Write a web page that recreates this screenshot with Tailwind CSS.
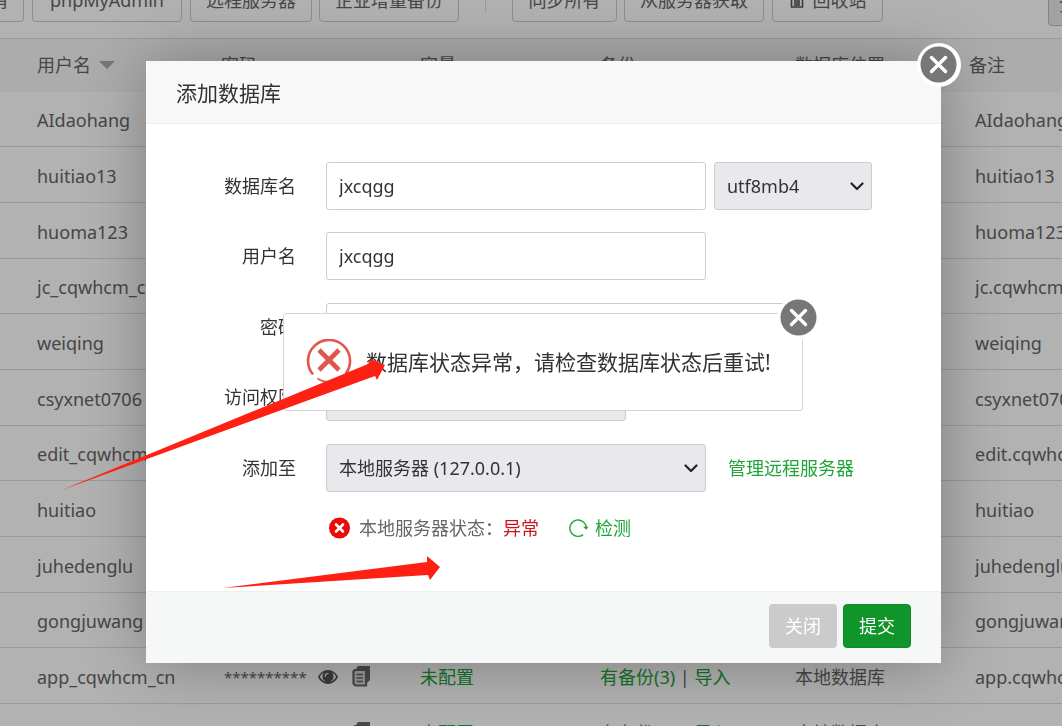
<!DOCTYPE html>
<html lang="zh-CN">
<head>
  <meta charset="UTF-8" />
  <meta name="viewport" content="width=device-width, initial-scale=1.0" />
  <title>数据库 - 添加数据库</title>
  <script src="https://cdn.jsdelivr.net/npm/@tailwindcss/browser@4"></script>
</head>
<body class="h-screen overflow-hidden bg-white font-['Noto_Sans','Noto_Sans_CJK_SC',sans-serif] text-[18px] leading-6 text-[#666]">

  <!-- 图标 -->
  <svg class="hidden">
    <symbol id="icon-close" viewBox="0 0 44 44">
      <circle cx="22" cy="22" r="22" fill="#fff" />
      <circle cx="21.500" cy="21.500" r="18" fill="#777" />
      <path d="M14.500 14.500l14 14M28.500 14.500l-14 14" stroke="#fff" stroke-width="3.400" stroke-linecap="round" />
    </symbol>
    <symbol id="icon-eye" viewBox="0 0 20 14">
      <path d="M10 0C5.500 0 2 3 0 7c2 4 5.500 7 10 7s8-3 10-7C18 3 14.500 0 10 0z" fill="#555" />
      <path d="M6 2.600C4.200 3.500 2.800 5 1.900 7c1.700 3 4.700 5 8.100 5s6.400-2 8.100-5c-.9-2-2.300-3.500-4.100-4.400a5.600 5.600 0 1 1-8 0z" fill="#fff" />
      <path d="M7.300 6.200A2.800 2.800 0 0 1 10 3.500" fill="none" stroke="#fff" stroke-width="1.200" stroke-linecap="round" />
    </symbol>
    <symbol id="icon-copy" viewBox="0 0 18 21">
      <path d="M6 0h12v14l-4 4V3H4z" fill="#6a6a6a" />
      <path d="M3 4h11v15.500H3.500L1.500 17.500V5.500z" fill="#ddd" stroke="#666" stroke-width="2.200" />
      <path d="M4.500 8.500h6.500M4.500 12h6.500M4.500 15.500h6.500" stroke="#666" stroke-width="1.600" />
    </symbol>
    <symbol id="icon-arrow" viewBox="0 0 14 9">
      <path d="M1.500 1.500L7 7l5.500-5.500" fill="none" stroke="#222" stroke-width="2.200" stroke-linecap="round" stroke-linejoin="round" />
    </symbol>
  </svg>

  <!-- 工具栏 -->
  <div class="flex h-[38px] items-end overflow-hidden pb-4 whitespace-nowrap">
    <button class="mr-2 -ml-[81px] h-11 w-[105px] shrink-0 rounded border border-[#ccc] pr-3.5 text-right">同步所有</button>
    <button class="mr-2 h-11 w-[150px] shrink-0 rounded border border-[#ccc]">phpMyAdmin</button>
    <button class="mr-[7px] h-11 w-[122px] shrink-0 rounded border border-[#ccc]">远程服务器</button>
    <button class="h-11 w-[140px] shrink-0 rounded border border-[#ccc]">企业增量备份</button>
    <span class="mx-[26px] mb-2.5 h-10 w-px shrink-0 bg-[#ddd]"></span>
    <button class="mr-[7px] h-11 w-[105px] shrink-0 rounded border border-[#ccc]">同步所有</button>
    <button class="mr-2 h-11 w-[140px] shrink-0 rounded border border-[#ccc]">从服务器获取</button>
    <button class="flex h-11 w-[111px] shrink-0 items-center justify-center gap-2 rounded border border-[#ccc]">
      <svg class="h-4 w-4" viewBox="0 0 16 16"><path d="M0 3h16M5 3V1h6v2M2.500 3v12h11V3M6 5v9M8 5v9M10 5v9" fill="none" stroke="#555" stroke-width="1.600" /></svg>
      回收站
    </button>
    <label for="category" class="sr-only">分类</label>
    <select id="category" class="-mr-[150px] -mb-1 ml-auto h-11 w-[164px] shrink-0 appearance-none rounded-sm border border-[#bbb] bg-[#e9e9ed] px-2.5">
      <option>全部分类</option>
    </select>
  </div>

  <!-- 数据库列表 -->
  <table class="w-[1162px] table-fixed border-t border-[#ddd] whitespace-nowrap">
    <colgroup>
      <col class="w-[211px]" /><col class="w-[199px]" /><col class="w-[180px]" /><col class="w-[195px]" /><col class="w-[174px]" /><col />
    </colgroup>
    <thead>
      <tr class="h-[53px] bg-[#f6f6f6] text-left [&>th]:px-2.5 [&>th]:font-normal">
        <th><span class="flex items-center gap-2 pl-[27px]">用户名 <i class="border-x-8 border-t-8 border-x-transparent border-t-[#aaa]"></i></span></th>
        <th>密码</th>
        <th>容量</th>
        <th>备份</th>
        <th>数据库位置</th>
        <th>备注</th>
      </tr>
    </thead>
    <tbody id="dbList"></tbody>
  </table>

  <div class="fixed inset-0 bg-black/30"></div>

  <!-- 添加数据库 -->
  <form class="absolute top-[61px] right-[121px] left-[146px] rounded-xs bg-white text-[#333] shadow-[1px_1px_64px_rgba(0,0,0,0.3)]" onsubmit="return false">
    <button type="button" aria-label="关闭窗口" class="absolute -top-[18px] -right-5 size-11"><svg class="size-11"><use href="#icon-close" /></svg></button>
    <h2 class="flex h-[63px] items-center border-b border-[#eee] bg-[#f8f8f8] px-[30px] pt-0.5 text-[21px]">添加数据库</h2>

    <div class="pt-[38px] [&>div]:mb-[22px] [&>div]:flex [&>div]:h-12 [&>div]:items-center [&>div:nth-child(even)]:mb-[23px]">
      <div>
        <label for="dbName" class="mr-[30px] w-[150px] shrink-0 text-right">数据库名</label>
        <input id="dbName" type="text" value="jxcqgg" class="h-12 w-[380px] rounded-[3px] border border-[#ccc] px-3" />
        <span class="relative ml-2">
          <select aria-label="编码" class="h-12 w-[158px] appearance-none rounded-[3px] border border-[#ccc] bg-[#e9e9ed] px-3">
            <option>utf8mb4</option>
            <option>utf8</option>
            <option>gbk</option>
          </select>
          <svg class="pointer-events-none absolute top-5 right-2 h-[9px] w-3.5"><use href="#icon-arrow" /></svg>
        </span>
      </div>
      <div>
        <label for="dbUser" class="mr-[30px] w-[150px] shrink-0 text-right">用户名</label>
        <input id="dbUser" type="text" value="jxcqgg" class="h-12 w-[380px] rounded-[3px] border border-[#ccc] px-3" />
      </div>
      <div>
        <label for="dbPass" class="mr-[30px] w-[150px] shrink-0 text-right">密码</label>
        <input id="dbPass" type="text" class="h-12 w-[470px] rounded-[3px] border border-[#ccc] px-3" />
      </div>
      <div>
        <label for="dbAccess" class="mr-[30px] w-[150px] shrink-0 text-right">访问权限</label>
        <select id="dbAccess" class="h-12 w-[300px] appearance-none rounded-[3px] border border-[#ccc] bg-[#e9e9ed] px-3">
          <option>本地服务器</option>
        </select>
      </div>
      <div>
        <label for="dbServer" class="mr-[30px] w-[150px] shrink-0 text-right">添加至</label>
        <span class="relative">
          <select id="dbServer" class="h-12 w-[380px] appearance-none rounded-[3px] border border-[#ccc] bg-[#e9e9ed] px-3">
            <option>本地服务器 (127.0.0.1)</option>
          </select>
          <svg class="pointer-events-none absolute top-5 right-2 h-[9px] w-3.5"><use href="#icon-arrow" /></svg>
        </span>
        <a href="#" class="ml-[22px] text-[#20a53a]">管理远程服务器</a>
      </div>
    </div>

    <div class="mb-[49px] flex h-7 items-center pl-[183px]">
      <svg class="mr-2 size-[22px]" viewBox="0 0 22 22">
        <circle cx="10.500" cy="11" r="10.500" fill="#ec0a0a" />
        <path d="M7 7.500l7 7M14 7.500l-7 7" stroke="#fff" stroke-width="2.600" stroke-linecap="round" />
      </svg>
      <span class="text-[#666]">本地服务器状态：</span>
      <span class="text-[#c9151e]">异常</span>
      <a href="#" class="ml-[30px] flex items-center gap-1.5 text-[#20a53a]">
        <svg class="size-5" viewBox="0 0 22 22">
          <path d="M15.500 18.300A9 9 0 1 1 19 11" fill="none" stroke="#20a53a" stroke-width="1.500" />
          <path d="M15.500 9.500h6L19 13z" fill="#20a53a" />
        </svg>
        检测
      </a>
    </div>

    <div class="flex justify-end gap-1.5 border-t border-[#edf0ef] bg-[#f5f8f7] px-[30px] pt-3 pb-[15px] text-white">
      <button type="button" class="h-11 w-[68px] rounded bg-[#cbcbcb]">关闭</button>
      <button type="submit" class="h-11 w-[68px] rounded border border-[#128a2a] bg-[#10952a]">提交</button>
    </div>
  </form>

  <!-- 错误提示 -->
  <div role="alert" class="absolute top-[313px] left-[283px] flex h-[98px] w-[520px] items-center rounded-[3px] border border-[#d3d4d3] bg-white pl-[22px] text-[21px] text-[#333]">
    <button type="button" aria-label="关闭提示" class="absolute -top-[18px] -right-[19px] size-11"><svg class="size-11"><use href="#icon-close" /></svg></button>
    <svg class="mr-3.5 size-[46px]" viewBox="0 0 46 46">
      <path d="M7 35.500A21 21 0 1 1 39.500 35" fill="none" stroke="#e0564a" stroke-width="2.600" />
      <path d="M11.500 39.500a21 21 0 0 0 23 0" fill="none" stroke="#e0564a" stroke-width="1.800" />
      <path d="M13 11l20 20M33 11L13 31" stroke="#e0564a" stroke-width="4.600" />
    </svg>
    <p class="whitespace-nowrap">数据库状态异常，请检查数据库状态后重试!</p>
  </div>

  <!-- 标注箭头 -->
  <svg class="pointer-events-none absolute top-0 left-0 h-[726px] w-full" fill="#ff2014">
    <polygon points="62,490 368,364 371,359 385,365 377,380 375,376" />
    <polygon points="223,588 427,562 427,556 440,567 430,580 428,575" />
  </svg>

  <script>
    const databases = [
      { user: 'AIdaohang', note: 'AIdaohang' },
      { user: 'huitiao13', note: 'huitiao13' },
      { user: 'huoma123', note: 'huoma123' },
      { user: 'jc_cqwhcm_cn', note: 'jc.cqwhcm.cn' },
      { user: 'weiqing', note: 'weiqing' },
      { user: 'csyxnet0706', note: 'csyxnet0706' },
      { user: 'edit_cqwhcm_cn', note: 'edit.cqwhcm.cn' },
      { user: 'huitiao', note: 'huitiao' },
      { user: 'juhedenglu', note: 'juhedenglu' },
      { user: 'gongjuwang', note: 'gongjuwang' },
      { user: 'app_cqwhcm_cn', note: 'app.cqwhcm.cn' },
      { user: 'shcmall', note: 'shcmall' }
    ];

    document.getElementById('dbList').innerHTML = databases.map((db) => `
      <tr class="h-[56px] border-b border-[#ddd] nth-[3n+1]:h-[55px] [&>td]:px-2.5 [&>td]:pt-0.5">
        <td><span class="pl-[27px]">${db.user}</span></td>
        <td>
          <span class="flex items-center pl-[3px]">
            <span class="w-[94px] text-[15px]">**********</span>
            <svg class="mr-3.5 h-3.5 w-5"><use href="#icon-eye" /></svg>
            <svg class="h-[21px] w-[18px]"><use href="#icon-copy" /></svg>
          </span>
        </td>
        <td><a href="#" class="text-[#20a53a]">未配置</a></td>
        <td><a href="#" class="text-[#20a53a]">有备份(3)</a> | <a href="#" class="text-[#20a53a]">导入</a></td>
        <td>本地数据库</td>
        <td><input type="text" aria-label="备注" value="${db.note}" class="block h-7 w-full px-1.5" /></td>
      </tr>
    `).join('');
  </script>

</body>
</html>
